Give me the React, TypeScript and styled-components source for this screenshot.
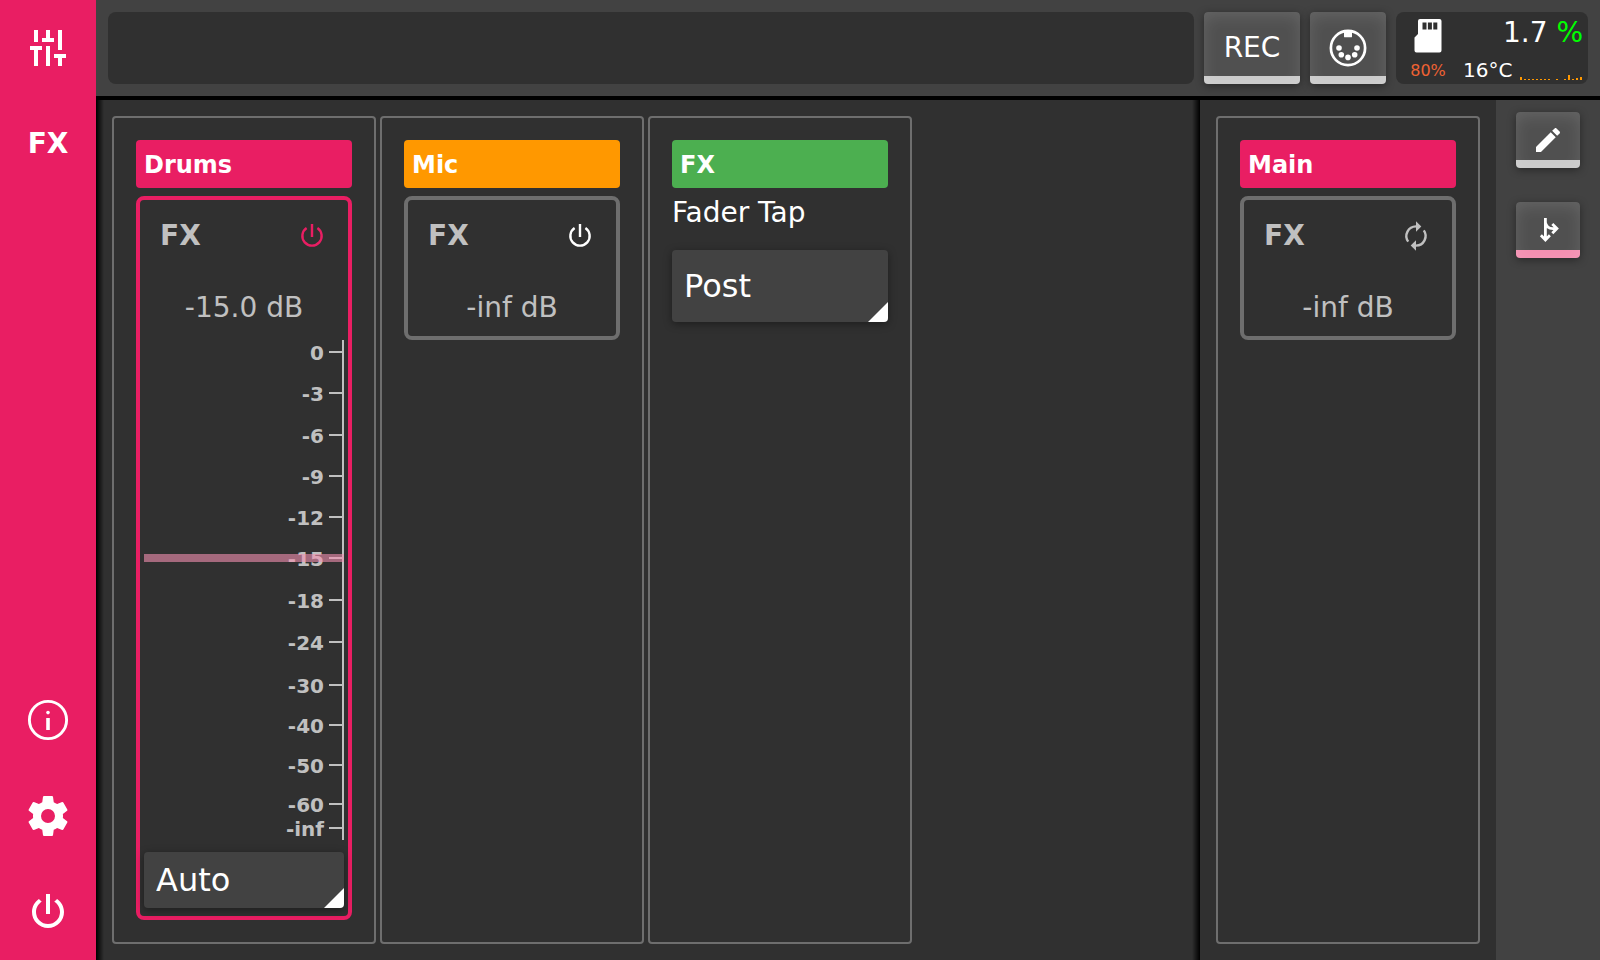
import React, { useState } from "react";
import styled, { createGlobalStyle } from "styled-components";

const color = {
  pink: "#e91e63",
  pinkLight: "#f48fb1",
  orange: "#ff9800",
  green: "#4caf50",
  bg: "#303030",
  bar: "#424242",
  line: "#6e6e6e",
  soft: "#c0c0c0",
};

const GlobalStyle = createGlobalStyle`
  *, *::before, *::after { box-sizing: border-box; }
  body {
    margin: 0;
    background: ${color.bg};
    color: #fff;
    font-family: "DejaVu Sans", Verdana, sans-serif;
    font-size: 28px;
    line-height: 32px;
  }
  button, select, input { font: inherit; color: inherit; margin: 0; }
  svg { display: block; }
`;

const Shell = styled.div`
  display: flex;
  min-height: 100vh;
`;

const Sidebar = styled.nav`
  flex: 0 0 96px;
  display: flex;
  flex-direction: column;
  background: ${color.pink};
`;

const NavButton = styled.button<{ $push?: boolean }>`
  display: flex;
  align-items: center;
  justify-content: center;
  height: 96px;
  padding: 0;
  border: 0;
  background: none;
  font-weight: bold;
  margin-top: ${(p) => (p.$push ? "auto" : "0")};
`;

const Page = styled.div`
  flex: 1;
  min-width: 0;
  display: flex;
  flex-direction: column;
`;

const TopBar = styled.header`
  display: flex;
  gap: 10px;
  padding: 12px;
  background: ${color.bar};
  border-bottom: 4px solid #000;
`;

const Display = styled.div`
  flex: 1;
  border-radius: 8px;
  background: ${color.bg};
`;

const PushButton = styled.button<{ $width: number; $height: number; $bar?: string }>`
  display: flex;
  align-items: center;
  justify-content: center;
  width: ${(p) => p.$width}px;
  height: ${(p) => p.$height}px;
  padding: 0;
  border: 0;
  border-radius: 4px;
  background: linear-gradient(${(p) => p.$bar ?? "#cbcbcb"}, ${(p) => p.$bar ?? "#cbcbcb"}) bottom / 100% 8px no-repeat #505050;
  box-shadow: inset 0 4px 16px rgba(255, 255, 255, 0.12), 0 2px 8px rgba(0, 0, 0, 0.4);
`;

const Status = styled.section`
  display: flex;
  width: 192px;
  height: 72px;
  padding-right: 5px;
  border-radius: 8px;
  background: ${color.bg};
`;

const Storage = styled.div`
  flex: 0 0 64px;
  display: flex;
  flex-direction: column;
  align-items: center;
  gap: 8px;
  padding-top: 7px;
  font-size: 16px;
  line-height: 20px;
  color: #ee6233;
`;

const Load = styled.div`
  flex: 1;
  display: flex;
  flex-direction: column;
  gap: 7px;
  padding-top: 5px;
`;

const LoadValue = styled.div`
  text-align: right;
`;

const LoadUnit = styled.span`
  color: #00ff00;
`;

const LoadDetail = styled.div`
  display: flex;
  align-items: flex-end;
  justify-content: space-between;
  padding: 0 1px 0 3px;
  font-size: 20px;
  line-height: 28px;
`;

const History = styled.div`
  display: flex;
  align-items: flex-end;
  gap: 2px;
  padding-bottom: 4px;
`;

const HistoryBar = styled.span`
  width: 2px;
  background: ${color.orange};
`;

const Body = styled.div`
  flex: 1;
  display: flex;
`;

const Channels = styled.main`
  flex: 1;
  display: flex;
  gap: 4px;
  padding: 16px;
  background:
    linear-gradient(to right, #000, transparent) left / 8px 100% no-repeat,
    linear-gradient(to left, #000, transparent) right / 8px 100% no-repeat;
`;

const Master = styled.section`
  display: flex;
  padding: 16px;
`;

const Tools = styled.aside`
  flex: 0 0 104px;
  display: flex;
  flex-direction: column;
  align-items: center;
  gap: 34px;
  padding-top: 12px;
  background: ${color.bar};
`;

const Strip = styled.section`
  flex: 0 0 264px;
  display: flex;
  flex-direction: column;
  padding: 22px;
  border: 2px solid ${color.line};
  border-radius: 4px;
`;

const StripTitle = styled.h2<{ $color: string }>`
  flex: none;
  margin: 0 0 8px;
  padding: 2px 8px 0;
  border-radius: 4px;
  background: ${(p) => p.$color};
  font-size: 24px;
  line-height: 46px;
`;

const Send = styled.div<{ $active?: boolean }>`
  flex: ${(p) => (p.$active ? "1" : "none")};
  display: flex;
  flex-direction: column;
  padding: 0 4px 8px;
  border: 4px solid ${(p) => (p.$active ? color.pink : color.line)};
  border-radius: 8px;
  color: ${color.soft};
`;

const SendHead = styled.div`
  display: flex;
  justify-content: space-between;
  padding: 20px 16px 0;
`;

const SendName = styled.h3`
  margin: 0;
  font-size: 28px;
`;

const IconButton = styled.button<{ $color: string }>`
  padding: 0;
  border: 0;
  background: none;
  color: ${(p) => p.$color};
`;

const SendLevel = styled.div`
  margin: 40px 0 4px;
  text-align: center;
`;

const Fader = styled.div`
  flex: 1;
  display: grid;
  margin: 12px 0;
`;

const Scale = styled.div`
  grid-area: 1 / 1;
  display: flex;
  flex-direction: column;
  padding-bottom: 11px;
  border-right: 2px solid ${color.soft};
  font-size: 20px;
  font-weight: bold;
`;

const ScaleStep = styled.div<{ $span: number }>`
  flex: ${(p) => p.$span} 1 0;
  display: flex;
  flex-direction: column;
  justify-content: flex-end;
`;

const ScaleMark = styled.div`
  display: flex;
  align-items: flex-start;
  justify-content: flex-end;
  gap: 5px;
  height: 2px;
  line-height: 4px;
  &::after {
    content: "";
    width: 13px;
    height: 2px;
    background: ${color.soft};
  }
`;

const FaderInput = styled.input`
  grid-area: 1 / 1;
  z-index: 1;
  appearance: none;
  writing-mode: vertical-lr;
  direction: rtl;
  width: 100%;
  height: auto;
  margin: 8px 0;
  background: transparent;
  &::-webkit-slider-runnable-track {
    width: 100%;
    background: transparent;
  }
  &::-webkit-slider-thumb {
    appearance: none;
    width: 200px;
    height: 8px;
    background: ${color.pinkLight};
    opacity: 0.6;
  }
`;

const Field = styled.label`
  display: flex;
  flex-direction: column;
  gap: 20px;
  line-height: 34px;
`;

const Select = styled.select<{ $height: number }>`
  appearance: none;
  flex: none;
  width: 100%;
  height: ${(p) => p.$height}px;
  padding: 0 12px;
  border: 0;
  border-radius: 4px;
  color: #fff;
  font-size: 32px;
  background: linear-gradient(135deg, transparent 48%, #fff 52%) right bottom / 20px 20px no-repeat ${color.bar};
  box-shadow: 0 2px 8px rgba(0, 0, 0, 0.4);
`;

const TuneIcon = () => (
  <svg width="48" height="48" viewBox="0 0 24 24" fill="currentColor" aria-hidden>
    <path d="M5 3h2v6H5zM3 11h6v2H7v8H5v-8H3zM11 3h2v4h2v2H9V7h2zM11 11h2v10h-2zM17 3h2v10h-2zM15 15h6v2h-2v4h-2v-4h-2z" />
  </svg>
);

const InfoIcon = () => (
  <svg width="48" height="48" viewBox="0 0 24 24" aria-hidden>
    <circle cx="12" cy="12" r="9.3" fill="none" stroke="currentColor" strokeWidth="1.45" />
    <circle cx="12" cy="8.3" r="0.9" fill="currentColor" />
    <path d="M11.1 11h1.8v6h-1.8z" fill="currentColor" />
  </svg>
);

const CogIcon = () => (
  <svg width="48" height="48" viewBox="0 0 24 24" fill="currentColor" aria-hidden>
    <path d="M12,15.5A3.5,3.5 0 0,1 8.5,12A3.5,3.5 0 0,1 12,8.5A3.5,3.5 0 0,1 15.5,12A3.5,3.5 0 0,1 12,15.5M19.43,12.97C19.47,12.65 19.5,12.33 19.5,12C19.5,11.67 19.47,11.34 19.43,11L21.54,9.37C21.73,9.22 21.78,8.95 21.66,8.73L19.66,5.27C19.54,5.05 19.27,4.96 19.05,5.05L16.56,6.05C16.04,5.66 15.5,5.32 14.87,5.07L14.5,2.42C14.46,2.18 14.25,2 14,2H10C9.75,2 9.54,2.18 9.5,2.42L9.13,5.07C8.5,5.32 7.96,5.66 7.44,6.05L4.95,5.05C4.73,4.96 4.46,5.05 4.34,5.27L2.34,8.73C2.21,8.95 2.27,9.22 2.46,9.37L4.57,11C4.53,11.34 4.5,11.67 4.5,12C4.5,12.33 4.53,12.65 4.57,12.97L2.46,14.63C2.27,14.78 2.21,15.05 2.34,15.27L4.34,18.73C4.46,18.95 4.73,19.03 4.95,18.95L7.44,17.94C7.96,18.34 8.5,18.68 9.13,18.93L9.5,21.58C9.54,21.82 9.75,22 10,22H14C14.25,22 14.46,21.82 14.5,21.58L14.87,18.93C15.5,18.67 16.04,18.34 16.56,17.94L19.05,18.95C19.27,19.03 19.54,18.95 19.66,18.73L21.66,15.27C21.78,15.05 21.73,14.78 21.54,14.63L19.43,12.97Z" />
  </svg>
);

const PowerIcon = () => (
  <svg width="48" height="48" viewBox="0 0 24 24" fill="currentColor" aria-hidden>
    <path d="M16.56,5.44L15.11,6.89C16.84,7.94 18,9.83 18,12A6,6 0 0,1 12,18A6,6 0 0,1 6,12C6,9.83 7.16,7.94 8.88,6.88L7.44,5.44C5.36,6.88 4,9.28 4,12A8,8 0 0,0 12,20A8,8 0 0,0 20,12C20,9.28 18.64,6.88 16.56,5.44M13,3H11V13H13" />
  </svg>
);

const StandbyIcon = () => (
  <svg width="32" height="32" viewBox="0 0 32 32" fill="none" stroke="currentColor" strokeWidth="2.4" aria-hidden>
    <path d="M16 4v13M10.6 8A9.65 9.65 0 1 0 21.4 8" />
  </svg>
);

const AutoIcon = () => (
  <svg width="32" height="32" viewBox="0 0 32 32" role="img" aria-label="Automatic">
    <g id="turn">
      <path d="M8.2 21.6A9.67 9.67 0 0 1 16 6.33" fill="none" stroke="currentColor" strokeWidth="2.4" />
      <path d="M16 1.3L21.3 6.5L16 11.7z" fill="currentColor" />
    </g>
    <use href="#turn" transform="rotate(180 16 16)" />
  </svg>
);

const DinIcon = () => (
  <svg width="40" height="40" viewBox="0 0 40 40" fill="currentColor" aria-hidden>
    <circle cx="20" cy="20" r="17.1" fill="none" stroke="currentColor" strokeWidth="2.7" />
    <path d="M16 3h8v5.4q0 .9-.9.9h-6.2q-.9 0-.9-.9z" />
    <circle cx="11" cy="20" r="2.8" />
    <circle cx="29" cy="20" r="2.8" />
    <circle cx="13.3" cy="26.7" r="2.8" />
    <circle cx="26.7" cy="26.7" r="2.8" />
    <circle cx="20" cy="29.4" r="2.8" />
  </svg>
);

const CardIcon = () => (
  <svg width="28" height="34" viewBox="0 0 28 34" role="img" aria-label="SD card">
    <path
      d="M6 0H25.5Q27.5 0 27.5 2V31.5Q27.5 33.5 25.5 33.5H2.5Q.5 33.5 .5 31.5V18.5L4 15V2Q4 0 6 0z"
      fill="#fff"
    />
    <path d="M8.5 3.5h4v7h-4zM13.9 3.5h4v7h-4zM19.3 3.5h4v7h-4z" fill={color.bg} />
  </svg>
);

const PencilIcon = () => (
  <svg width="32" height="32" viewBox="0 0 24 24" fill="currentColor" aria-hidden>
    <path d="M20.71,7.04C21.1,6.65 21.1,6 20.71,5.63L18.37,3.29C18,2.9 17.35,2.9 16.96,3.29L15.12,5.12L18.87,8.87M3,17.25V21H6.75L17.81,9.93L14.06,6.18L3,17.25Z" />
  </svg>
);

const RouteIcon = () => (
  <svg width="32" height="32" viewBox="0 0 32 32" fill="none" stroke="currentColor" strokeWidth="2.8" aria-hidden>
    <path d="M13.4 4v22M8.9 21.2l4.5 4.7 4.5-4.7M13.4 8.5Q14.5 14.6 21 14.6H25.5M20.3 10l4.6 4.6-4.6 4.6" />
  </svg>
);

/* Each entry is a label and its distance from the entry above. */
const scaleMarks: [string, number][] = [
  ["0", 13],
  ["-3", 41],
  ["-6", 42],
  ["-9", 41],
  ["-12", 41],
  ["-15", 41],
  ["-18", 42],
  ["-24", 42],
  ["-30", 43],
  ["-40", 40],
  ["-50", 40],
  ["-60", 39],
  ["-inf", 24],
];

const loadHistory = [3, 1, 1, 1, 1, 1, 1, 1, 0, 1, 0, 1, 5, 1, 2, 3];

function LevelFader() {
  const [level, setLevel] = useState(567);
  return (
    <Fader>
      <Scale aria-hidden>
        {scaleMarks.map(([label, span]) => (
          <ScaleStep key={label} $span={span}>
            <ScaleMark>{label}</ScaleMark>
          </ScaleStep>
        ))}
      </Scale>
      <FaderInput
        type="range"
        aria-label="Drums FX send level"
        min={0}
        max={1000}
        value={level}
        onChange={(e) => setLevel(Number(e.target.value))}
      />
    </Fader>
  );
}

export default function App() {
  return (
    <>
      <GlobalStyle />
      <Shell>
        <Sidebar>
          <NavButton aria-label="Mixer"><TuneIcon /></NavButton>
          <NavButton>FX</NavButton>
          <NavButton $push aria-label="Info"><InfoIcon /></NavButton>
          <NavButton aria-label="Settings"><CogIcon /></NavButton>
          <NavButton aria-label="Power"><PowerIcon /></NavButton>
        </Sidebar>
        <Page>
          <TopBar>
            <Display />
            <PushButton $width={96} $height={72}>REC</PushButton>
            <PushButton $width={76} $height={72} aria-label="MIDI"><DinIcon /></PushButton>
            <Status>
              <Storage>
                <CardIcon />
                <span>80%</span>
              </Storage>
              <Load>
                <LoadValue>1.7 <LoadUnit>%</LoadUnit></LoadValue>
                <LoadDetail>
                  <span>16°C</span>
                  <History>
                    {loadHistory.map((h, i) => (
                      <HistoryBar key={i} style={{ height: h }} />
                    ))}
                  </History>
                </LoadDetail>
              </Load>
            </Status>
          </TopBar>
          <Body>
            <Channels>
              <Strip>
                <StripTitle $color={color.pink}>Drums</StripTitle>
                <Send $active>
                  <SendHead>
                    <SendName>FX</SendName>
                    <IconButton $color={color.pink} aria-label="Drums FX on"><StandbyIcon /></IconButton>
                  </SendHead>
                  <SendLevel>-15.0 dB</SendLevel>
                  <LevelFader />
                  <Select $height={56} aria-label="Drums FX mode" defaultValue="Auto">
                    <option>Auto</option>
                  </Select>
                </Send>
              </Strip>
              <Strip>
                <StripTitle $color={color.orange}>Mic</StripTitle>
                <Send>
                  <SendHead>
                    <SendName>FX</SendName>
                    <IconButton $color="#fff" aria-label="Mic FX on"><StandbyIcon /></IconButton>
                  </SendHead>
                  <SendLevel>-inf dB</SendLevel>
                </Send>
              </Strip>
              <Strip>
                <StripTitle $color={color.green}>FX</StripTitle>
                <Field>
                  Fader Tap
                  <Select $height={72} defaultValue="Post">
                    <option>Post</option>
                  </Select>
                </Field>
              </Strip>
            </Channels>
            <Master>
              <Strip>
                <StripTitle $color={color.pink}>Main</StripTitle>
                <Send>
                  <SendHead>
                    <SendName>FX</SendName>
                    <AutoIcon />
                  </SendHead>
                  <SendLevel>-inf dB</SendLevel>
                </Send>
              </Strip>
            </Master>
            <Tools>
              <PushButton $width={64} $height={56} aria-label="Edit"><PencilIcon /></PushButton>
              <PushButton $width={64} $height={56} $bar={color.pinkLight} aria-label="Routing"><RouteIcon /></PushButton>
            </Tools>
          </Body>
        </Page>
      </Shell>
    </>
  );
}
